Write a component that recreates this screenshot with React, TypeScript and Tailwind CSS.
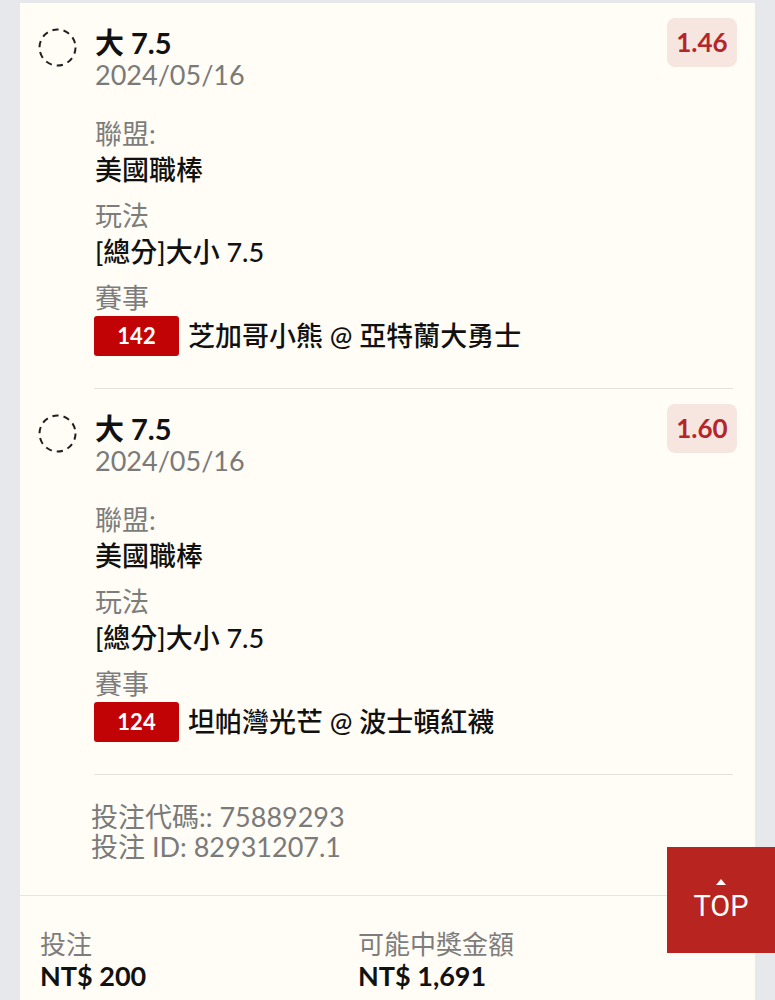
import React from "react";

function DashedCircle() {
  return (
    <svg width="39" height="39" viewBox="0 0 39 39" className="shrink-0 mt-[1px]">
      <circle cx="19.5" cy="19.5" r="18" fill="none" stroke="#1f1f1f" strokeWidth="2" strokeDasharray="6.3 5" />
    </svg>
  );
}

type Item = {
  title: string;
  date: string;
  odds: string;
  league: string;
  play: string;
  no: string;
  match: string;
};

function BetItem({ it }: { it: Item }) {
  return (
    <div className="flex pl-[18px] pr-[18px] pt-[24px]">
      <DashedCircle />
      <div className="ml-[18px] flex-1">
        <div className="flex justify-between items-start">
          <div>
            <div className="text-[29px] leading-[32px] font-bold text-[#111]">{it.title}</div>
            <div className="text-[27px] leading-[32px] text-[#7a7a7a]">{it.date}</div>
          </div>
          <div className="-mt-[9px] w-[70px] h-[49px] rounded-[8px] bg-[#f7e5e0] flex items-center justify-center text-[26px] font-bold text-[#b3262a]">
            {it.odds}
          </div>
        </div>
        <div className="mt-[25px]">
          <div className="text-[27px] leading-[36px] text-[#7d7d7d]">聯盟:</div>
          <div className="text-[27px] leading-[36px] font-medium text-[#111]">{it.league}</div>
        </div>
        <div className="mt-[10px]">
          <div className="text-[27px] leading-[36px] text-[#7d7d7d]">玩法</div>
          <div className="text-[27px] leading-[36px] font-medium text-[#111]">{it.play}</div>
        </div>
        <div className="mt-[10px]">
          <div className="text-[27px] leading-[36px] text-[#7d7d7d]">賽事</div>
          <div className="flex items-center h-[39px]">
            <div className="w-[85px] h-[40px] -ml-[1px] rounded-[3px] bg-[#c10306] flex items-center justify-center text-white text-[22px] font-bold">
              {it.no}
            </div>
            <div className="ml-[9px] text-[27px] leading-[36px] font-medium text-[#111]">{it.match}</div>
          </div>
        </div>
        <div className="mt-[33px] mr-[4px] -ml-[1px] h-px bg-[#e4e2dc]" />
      </div>
    </div>
  );
}

export default function App() {
  const items: Item[] = [
    {
      title: "大 7.5",
      date: "2024/05/16",
      odds: "1.46",
      league: "美國職棒",
      play: "[總分]大小 7.5",
      no: "142",
      match: "芝加哥小熊 @ 亞特蘭大勇士",
    },
    {
      title: "大 7.5",
      date: "2024/05/16",
      odds: "1.60",
      league: "美國職棒",
      play: "[總分]大小 7.5",
      no: "124",
      match: "坦帕灣光芒 @ 波士頓紅襪",
    },
  ];
  return (
    <div className="relative min-h-screen bg-[#e7e8ec] pt-[3px] font-[Lato,'Noto_Sans_CJK_TC',sans-serif] overflow-hidden">
      <div className="mx-[20px] bg-[#fffdf6] min-h-[1000px]">
        {items.map((it, i) => (
          <BetItem key={i} it={it} />
        ))}
        <div className="pl-[71px] pt-[27px] pb-[33px] text-[27px] leading-[30px] text-[#7a7a7a]">
          <div>投注代碼:: 75889293</div>
          <div>投注 ID: 82931207.1</div>
        </div>
        <div className="h-px bg-[#e8e6e0]" />
        <div className="flex px-[20px] pt-[32px]">
          <div className="w-[318px]">
            <div className="text-[26px] leading-[32px] text-[#7d7d7d]">投注</div>
            <div className="text-[27px] leading-[32px] font-bold text-[#111]">NT$ 200</div>
          </div>
          <div>
            <div className="text-[26px] leading-[32px] text-[#7d7d7d]">可能中獎金額</div>
            <div className="text-[27px] leading-[32px] font-bold text-[#111]">NT$ 1,691</div>
          </div>
        </div>
      </div>
      <div className="absolute left-[667px] top-[847px] w-[108px] h-[106px] bg-[#b8241f] flex flex-col items-center justify-center">
        <div className="w-0 h-0 border-l-[5px] border-r-[5px] border-b-[6px] border-l-transparent border-r-transparent border-b-white" />
        <div className="mt-[5px] text-[29px] leading-[32px] text-white font-[Roboto,'Liberation_Sans',sans-serif]">TOP</div>
      </div>
    </div>
  );
}
